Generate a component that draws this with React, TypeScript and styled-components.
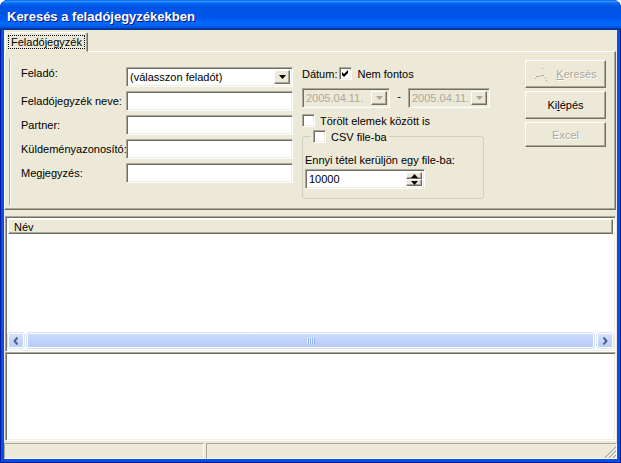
import React from 'react';
import styled, { createGlobalStyle, css } from 'styled-components';

const GlobalStyle = createGlobalStyle`
  html, body { margin: 0; padding: 0; background: #ffffff; }
  body {
    font-family: "Liberation Sans", Arial, sans-serif;
    font-size: 11px;
    color: #000;
  }
`;

// classic 3d edges
const sunken = css`
  box-sizing: border-box;
  border: 1px solid;
  border-color: #aca899 #ffffff #ffffff #aca899;
  box-shadow: inset 1px 1px 0 #716f64, inset -1px -1px 0 #f1efe2;
`;

const raised = css`
  box-sizing: border-box;
  border: 1px solid;
  border-color: #ffffff #716f64 #716f64 #ffffff;
  box-shadow: inset -1px -1px 0 #aca899;
  background: #ece9d8;
`;

const Frame = styled.div`
  width: 621px;
  height: 463px;
  box-sizing: border-box;
  display: flex;
  flex-direction: column;
  background: #0a4fde;
  border-radius: 8px 8px 0 0;
  overflow: hidden;
  box-shadow: inset 1px 0 0 #0019a8, inset -1px 0 0 #0019a8, inset 0 -1px 0 #0019a8;
`;

const TitleBar = styled.div`
  height: 30px;
  flex: none;
  box-sizing: border-box;
  padding: 3px 0 0 7px;
  display: flex;
  align-items: center;
  color: #fff;
  font-weight: bold;
  font-size: 13px;
  text-shadow: 1px 1px 0 #0a1883;
  background: linear-gradient(
    to bottom,
    #0058ee 0%, #3593ff 4%, #288eff 6%, #127dff 8%, #036ffc 10%,
    #0262ee 14%, #0057e5 20%, #0054e3 24%, #0055eb 56%, #005bf5 66%,
    #026afe 76%, #0062ef 86%, #0052d6 92%, #0040ab 94%, #003092 100%
  );
`;

const Client = styled.div`
  flex: 1;
  min-height: 0;
  margin: 0 4px 4px;
  background: #ece9d8;
  display: flex;
  flex-direction: column;
`;

const TabStrip = styled.div`
  height: 21px;
  flex: none;
  display: flex;
  align-items: flex-end;
  padding-left: 1px;
  position: relative;
  z-index: 1;
`;

const Tab = styled.div`
  width: 83px;
  height: 20px;
  margin-bottom: -1px;
  box-sizing: border-box;
  border: 1px solid;
  border-color: #ffffff #716f64 transparent #ffffff;
  border-radius: 2px 2px 0 0;
  box-shadow: inset -1px 0 0 #aca899;
  background: #ece9d8;
  display: flex;
  align-items: flex-start;
  justify-content: center;
  padding-top: 2px;
`;

const FocusText = styled.span`
  border: 1px dotted #000;
  padding: 0 2px;
  line-height: 12px;
`;

const TabPage = styled.div`
  height: 159px;
  flex: none;
  margin-right: 1px;
  box-sizing: border-box;
  border: 1px solid;
  border-color: #ffffff #716f64 #716f64 #ffffff;
  box-shadow: inset -1px -1px 0 #aca899;
  padding: 6px 9px 0 4px;
`;

const PagePanel = styled.div`
  height: 147px;
  box-sizing: border-box;
  border-left: 1px solid #aca899;
  box-shadow: inset 1px 0 0 #ffffff;
  display: flex;
  align-items: flex-start;
  padding: 2px 0 0 11px;
`;

const FieldGrid = styled.div`
  margin-top: 7px;
  display: grid;
  grid-template-columns: 105px 167px;
  grid-auto-rows: 20px;
  row-gap: 4px;
  align-items: center;
`;

const Label = styled.label<{ $lift?: number }>`
  white-space: nowrap;
  margin-top: ${(p) => (p.$lift ? -p.$lift : 0)}px;
`;

const Edit = styled.div<{ $disabled?: boolean }>`
  ${sunken};
  height: 20px;
  background: ${(p) => (p.$disabled ? '#ece9d8' : '#fff')};
  color: ${(p) => (p.$disabled ? '#aca899' : '#000')};
  display: flex;
  align-items: stretch;
  padding: 2px;
  min-width: 0;
`;

const EditText = styled.span`
  flex: 1;
  padding-left: 1px;
  display: flex;
  align-items: center;
  white-space: nowrap;
  overflow: hidden;
`;

const DropBtn = styled.span`
  ${raised};
  width: 16px;
  flex: none;
  display: flex;
  align-items: center;
  justify-content: center;
`;

const SpinCol = styled.span`
  width: 16px;
  flex: none;
  display: flex;
  flex-direction: column;
`;

const SpinBtn = styled.span`
  ${raised};
  flex: 1;
  display: flex;
  align-items: center;
  justify-content: center;
`;

const MidCol = styled.div`
  margin: 7px 0 0 9px;
  width: 188px;
  display: flex;
  flex-direction: column;
`;

const CheckRow = styled.div<{ $mt?: number }>`
  display: flex;
  align-items: center;
  height: 13px;
  margin-top: ${(p) => p.$mt ?? 0}px;
  white-space: nowrap;
`;

const Box = styled.span`
  ${sunken};
  width: 13px;
  height: 13px;
  flex: none;
  background: #fff;
  display: flex;
  align-items: center;
  justify-content: center;
`;

const BoxText = styled.span<{ $gap?: number }>`
  margin-left: ${(p) => p.$gap ?? 5}px;
`;

const DateRow = styled.div`
  margin-top: 8px;
  display: flex;
  align-items: center;
  height: 20px;
`;

const Dash = styled.span`
  width: 18px;
  text-align: center;
  margin-top: -4px;
`;

const Group = styled.fieldset`
  margin: 3px 0 0;
  width: 182px;
  height: 69px;
  box-sizing: border-box;
  border: 1px solid #d0d0bf;
  border-radius: 3px;
  padding: 0 2px;
`;

const Legend = styled.legend`
  margin-left: 6px;
  padding: 0 2px;
  display: flex;
  align-items: center;
  height: 13px;
`;

const GroupLabel = styled.div`
  margin-top: 11px;
  white-space: nowrap;
`;

const ButtonCol = styled.div`
  margin-left: auto;
  width: 81px;
  display: flex;
  flex-direction: column;
  gap: 3px;
`;

const Button = styled.div<{ $h: number; $disabled?: boolean }>`
  ${raised};
  height: ${(p) => p.$h}px;
  display: flex;
  align-items: center;
  justify-content: center;
  gap: 6px;
  color: ${(p) => (p.$disabled ? '#aca899' : '#000')};
  text-shadow: ${(p) => (p.$disabled ? '1px 1px 0 #fff' : 'none')};
`;

const ListArea = styled.div`
  ${sunken};
  height: 136px;
  flex: none;
  margin: 6px 1px 0;
  padding: 2px;
  display: flex;
  flex-direction: column;
  background: #fff;
`;

const Header = styled.div`
  ${raised};
  height: 15px;
  flex: none;
  padding-left: 5px;
  display: flex;
  align-items: center;
`;

const ListBody = styled.div`
  flex: 1;
  background: #fff;
`;

const HScroll = styled.div`
  height: 17px;
  flex: none;
  display: flex;
  align-items: stretch;
  gap: 1px;
  padding: 1px 0;
  box-sizing: border-box;
  background: #fefefb;
`;

const ScrollBtn = styled.span`
  width: 16px;
  flex: none;
  box-sizing: border-box;
  border: 1px solid #fff;
  border-radius: 2px;
  background: linear-gradient(to bottom, #d4e1fd, #b8cdfa);
  box-shadow: 0 0 0 0.5px #b9c9ef;
  display: flex;
  align-items: center;
  justify-content: center;
`;

const Thumb = styled.span`
  flex: 1;
  margin: 0 2px;
  box-sizing: border-box;
  border: 1px solid #fff;
  border-radius: 2px;
  background: linear-gradient(to bottom, #cbdafd, #b7cbf8);
  box-shadow: 0 0 0 0.5px #a8bde9;
  display: flex;
  align-items: center;
  justify-content: center;
`;

const Memo = styled.div`
  ${sunken};
  height: 89px;
  flex: none;
  margin: 0 1px;
  background: #fff;
`;

const StatusBar = styled.div`
  height: 16px;
  flex: none;
  margin-top: 2px;
  display: flex;
  gap: 2px;
`;

const StatusPanel = styled.div<{ $w?: number }>`
  box-sizing: border-box;
  border: 1px solid;
  border-color: #aca899 #fff #fff #aca899;
  ${(p) => (p.$w ? `width: ${p.$w}px; flex: none;` : 'flex: 1;')}
  display: flex;
  justify-content: flex-end;
  align-items: flex-end;
`;

const Check = () => (
  <svg width="9" height="9" viewBox="0 0 9 9">
    <path d="M1 3 L3 5 L7 1 L7 4 L3 8 L1 6 Z" fill="#000" />
  </svg>
);

const DownArrow = ({ color = '#000' }: { color?: string }) => (
  <svg width="7" height="4" viewBox="0 0 7 4">
    <path d="M0 0 H7 L3.5 4 Z" fill={color} />
  </svg>
);

const UpArrow = () => (
  <svg width="7" height="4" viewBox="0 0 7 4">
    <path d="M0 4 H7 L3.5 0 Z" fill="#000" />
  </svg>
);

const Chevron = ({ dir }: { dir: 'left' | 'right' }) => (
  <svg width="6" height="8" viewBox="0 0 6 8">
    <path
      d={dir === 'left' ? 'M4.5 0.5 L1.5 4 L4.5 7.5' : 'M1.5 0.5 L4.5 4 L1.5 7.5'}
      fill="none"
      stroke="#4d6185"
      strokeWidth="2"
    />
  </svg>
);

const Grip = () => (
  <svg width="8" height="7" viewBox="0 0 8 7">
    {[0, 2, 4, 6].map((x) => (
      <rect key={x} x={x} y="0" width="1" height="7" fill="#eef3fe" />
    ))}
    {[1, 3, 5, 7].map((x) => (
      <rect key={x} x={x} y="1" width="1" height="6" fill="#8cb0f8" />
    ))}
  </svg>
);

const SizeGrip = () => (
  <svg width="12" height="12" viewBox="0 0 12 12">
    {[0, 4, 8].map((o) => (
      <g key={o}>
        <line x1={12} y1={o + 1} x2={o + 1} y2={12} stroke="#aca899" strokeWidth="1.2" />
        <line x1={12} y1={o + 2.5} x2={o + 2.5} y2={12} stroke="#fff" strokeWidth="1" />
      </g>
    ))}
  </svg>
);

const FadedIcon = () => (
  <svg width="16" height="14" viewBox="0 0 16 14">
    <rect x="8" y="1" width="1" height="1" fill="#aca899" />
    <rect x="2" y="9" width="4" height="1" fill="#aca899" />
    <rect x="7" y="8" width="3" height="1" fill="#aca899" />
    <rect x="11" y="10" width="1" height="1" fill="#aca899" />
    <rect x="12" y="13" width="1" height="1" fill="#aca899" />
    <rect x="1" y="11" width="1" height="1" fill="#aca899" />
  </svg>
);

const fields = ['Feladójegyzék neve:', 'Partner:', 'Küldeményazonosító:', 'Megjegyzés:'];

export default function App() {
  return (
    <>
      <GlobalStyle />
      <Frame>
        <TitleBar>Keresés a feladójegyzékekben</TitleBar>
        <Client>
          <TabStrip>
            <Tab>
              <FocusText>Feladójegyzék</FocusText>
            </Tab>
          </TabStrip>
          <TabPage>
            <PagePanel>
              <FieldGrid>
                <Label $lift={8}>Feladó:</Label>
                <Edit>
                  <EditText>(válasszon feladót)</EditText>
                  <DropBtn>
                    <DownArrow />
                  </DropBtn>
                </Edit>
                {fields.map((f) => (
                  <React.Fragment key={f}>
                    <Label>{f}</Label>
                    <Edit />
                  </React.Fragment>
                ))}
              </FieldGrid>

              <MidCol>
                <CheckRow>
                  <span style={{ marginRight: 2 }}>Dátum:</span>
                  <Box>
                    <Check />
                  </Box>
                  <BoxText>Nem fontos</BoxText>
                </CheckRow>
                <DateRow>
                  <Edit $disabled style={{ width: 88 }}>
                    <EditText>2005.04.11.</EditText>
                    <DropBtn>
                      <DownArrow color="#aca899" />
                    </DropBtn>
                  </Edit>
                  <Dash>-</Dash>
                  <Edit $disabled style={{ width: 82 }}>
                    <EditText>2005.04.11.</EditText>
                    <DropBtn>
                      <DownArrow color="#aca899" />
                    </DropBtn>
                  </Edit>
                </DateRow>
                <CheckRow $mt={6}>
                  <Box />
                  <BoxText>Törölt elemek között is</BoxText>
                </CheckRow>
                <Group>
                  <Legend>
                    <Box />
                    <BoxText>CSV file-ba</BoxText>
                  </Legend>
                  <GroupLabel>Ennyi tétel kerüljön egy file-ba:</GroupLabel>
                  <Edit style={{ width: 120, marginTop: 3 }}>
                    <EditText>10000</EditText>
                    <SpinCol>
                      <SpinBtn>
                        <UpArrow />
                      </SpinBtn>
                      <SpinBtn>
                        <DownArrow />
                      </SpinBtn>
                    </SpinCol>
                  </Edit>
                </Group>
              </MidCol>

              <ButtonCol>
                <Button $h={28} $disabled>
                  <FadedIcon />
                  <span>
                    <u>K</u>eresés
                  </span>
                </Button>
                <Button $h={28}>
                  <span>
                    Ki<u>l</u>épés
                  </span>
                </Button>
                <Button $h={25} $disabled>
                  Excel
                </Button>
              </ButtonCol>
            </PagePanel>
          </TabPage>

          <ListArea>
            <Header>Név</Header>
            <ListBody />
            <HScroll>
              <ScrollBtn>
                <Chevron dir="left" />
              </ScrollBtn>
              <Thumb>
                <Grip />
              </Thumb>
              <ScrollBtn>
                <Chevron dir="right" />
              </ScrollBtn>
            </HScroll>
          </ListArea>

          <Memo />

          <StatusBar>
            <StatusPanel $w={200} />
            <StatusPanel>
              <SizeGrip />
            </StatusPanel>
          </StatusBar>
        </Client>
      </Frame>
    </>
  );
}
